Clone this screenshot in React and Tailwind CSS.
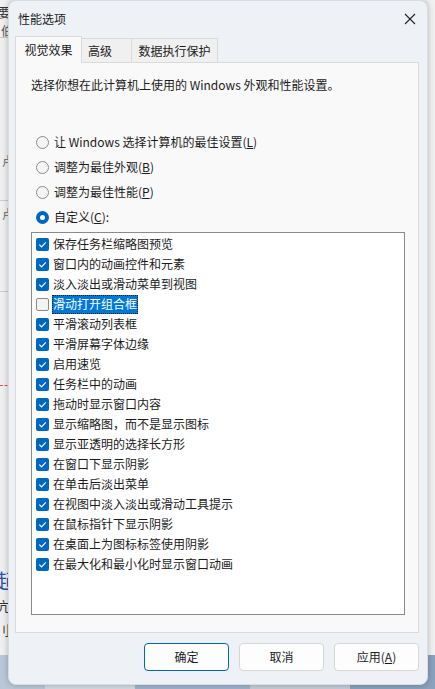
import React, { useState } from 'react';

const FONT = { fontFamily: '"Noto Sans CJK SC", "Noto Sans", sans-serif' };

const effects = [
  ['保存任务栏缩略图预览', true],
  ['窗口内的动画控件和元素', true],
  ['淡入淡出或滑动菜单到视图', true],
  ['滑动打开组合框', false],
  ['平滑滚动列表框', true],
  ['平滑屏幕字体边缘', true],
  ['启用速览', true],
  ['任务栏中的动画', true],
  ['拖动时显示窗口内容', true],
  ['显示缩略图，而不是显示图标', true],
  ['显示亚透明的选择长方形', true],
  ['在窗口下显示阴影', true],
  ['在单击后淡出菜单', true],
  ['在视图中淡入淡出或滑动工具提示', true],
  ['在鼠标指针下显示阴影', true],
  ['在桌面上为图标标签使用阴影', true],
  ['在最大化和最小化时显示窗口动画', true],
];

const Radio = ({ checked, children }) => (
  <div className="flex items-center h-[20px]">
    {checked ? (
      <span className="w-[13px] h-[13px] rounded-full bg-[#0067c0] flex items-center justify-center">
        <span className="w-[5px] h-[5px] rounded-full bg-white" />
      </span>
    ) : (
      <span className="w-[13px] h-[13px] rounded-full border border-[#8b8b8b] bg-[#f5f5f5]" />
    )}
    <span className="ml-[5px] text-[12px] text-[#1b1b1b] leading-none">{children}</span>
  </div>
);

const Check = ({ checked }) =>
  checked ? (
    <span className="w-[13px] h-[13px] rounded-[2px] bg-[#0067c0] flex items-center justify-center shrink-0">
      <svg width="9" height="9" viewBox="0 0 10 10" fill="none">
        <path d="M1.5 5.2 L4 7.6 L8.6 2.6" stroke="white" strokeWidth="1.3" />
      </svg>
    </span>
  ) : (
    <span className="w-[13px] h-[13px] rounded-[2px] border border-[#8b8b8b] bg-[#f3f3f3] shrink-0" />
  );

const Btn = ({ primary, children }) => (
  <button
    className={`w-[85px] h-[28px] rounded-[4px] bg-[#fdfdfd] text-[12px] text-[#1b1b1b] ${
      primary ? 'border border-[#0067c0]' : 'border border-[#d6d6d6]'
    }`}
  >
    {children}
  </button>
);

export default function App() {
  const [selected] = useState(3);
  return (
    <div className="relative w-[435px] h-[689px] overflow-hidden bg-[#f2f2f2]" style={FONT}>
      {/* desktop behind the dialog */}
      <div className="absolute left-0 top-0 w-[12px] h-[689px] bg-[#f0f0f0] overflow-hidden">
        <div className="absolute left-[-2px] top-[2px] text-[13px] text-[#333]">要</div>
        <div className="absolute left-[1px] top-[22px] text-[12px] text-[#555]">伯</div>
        <div className="absolute left-0 top-[37px] w-[12px] h-px bg-[#c8c8c8]" />
        <div className="absolute left-[2px] top-[152px] text-[12px] text-[#666]">卢</div>
        <div className="absolute left-0 top-[200px] w-[12px] h-px bg-[#cccccc]" />
        <div className="absolute left-[2px] top-[205px] text-[12px] text-[#666]">卢</div>
        <div className="absolute left-0 top-[291px] w-[12px] h-px bg-[#cccccc]" />
        <div className="absolute left-0 top-[385px] w-[12px] border-t border-dashed border-[#e05050]" />
        <div className="absolute left-[-4px] top-[566px] text-[20px] text-[#2a4fb0]">起</div>
        <div className="absolute left-[-3px] top-[596px] text-[13px] text-[#333]">亢</div>
        <div className="absolute left-[-3px] top-[620px] text-[13px] text-[#333]">刂</div>
      </div>
      <div className="absolute left-0 top-[655px] w-[435px] h-[34px] flex">
        <div className="w-[45px] bg-[#b9c8d8]" />
        <div className="w-[90px] bg-[#d4dbe3]" />
        <div className="w-[115px] bg-[#9fb3c9]" />
        <div className="w-[100px] bg-[#c5cdd6]" />
        <div className="flex-1 bg-[#8aa2bd]" />
      </div>

      {/* dialog window */}
      <div className="absolute left-[8px] top-0 w-[420px] h-[685px] rounded-[8px] bg-[#eef2f7] shadow-[0_0_6px_rgba(0,0,0,0.25)] border border-[#d8dde3] flex flex-col">
        <div className="h-[35px] flex items-center justify-between pl-[9px] pr-[10px]">
          <span className="text-[12px] text-[#1b1b1b]">性能选项</span>
          <svg width="12" height="12" viewBox="0 0 12 12" className="mr-[1px]">
            <path d="M1 1 L11 11 M11 1 L1 11" stroke="#222" strokeWidth="1.1" />
          </svg>
        </div>

        {/* tabs */}
        <div className="flex items-end pl-[6px] h-[26px] relative z-10">
          <div className="h-[27px] w-[67px] flex items-center justify-center whitespace-nowrap bg-[#f9f9f9] border border-b-0 border-[#dadada] text-[12px] text-[#1b1b1b] mb-[-1px]">
            视觉效果
          </div>
          <div className="h-[24px] w-[50px] pl-[6px] flex items-center whitespace-nowrap bg-[#f0f0f0] border border-l-0 border-b-0 border-[#dadada] text-[12px] text-[#1b1b1b]">
            高级
          </div>
          <div className="h-[24px] w-[86px] flex items-center justify-center whitespace-nowrap bg-[#f0f0f0] border border-l-0 border-b-0 border-[#dadada] text-[12px] text-[#1b1b1b]">
            数据执行保护
          </div>
        </div>

        {/* panel */}
        <div className="mx-[6px] w-[404px] h-[571px] bg-[#f9f9f9] border border-[#dadada] px-[15px] pt-[14px]">
          <p className="text-[12px] text-[#1b1b1b] leading-[16px]">选择你想在此计算机上使用的 Windows 外观和性能设置。</p>
          <div className="mt-[39px] flex flex-col gap-[5px] pl-[5px]">
            <Radio>让 Windows 选择计算机的最佳设置(<u>L</u>)</Radio>
            <Radio>调整为最佳外观(<u>B</u>)</Radio>
            <Radio>调整为最佳性能(<u>P</u>)</Radio>
            <Radio checked>自定义(<u>C</u>):</Radio>
          </div>
          <div className="mt-[5px] w-[374px] h-[383px] bg-white border border-[#8a8a8a] pt-[1px]">
            {effects.map(([label, on], i) => (
              <div key={label} className="flex items-center h-[20px] pl-[4px]">
                <Check checked={on} />
                <span
                  className={`ml-[3px] px-[1px] h-[19px] flex items-center text-[12px] leading-none ${
                    i === selected
                      ? 'bg-[#0078d7] text-white outline outline-1 outline-dotted outline-[#222] -outline-offset-1'
                      : 'text-[#1b1b1b]'
                  }`}
                >
                  {label}
                </span>
              </div>
            ))}
          </div>
        </div>

        {/* buttons */}
        <div className="flex justify-end gap-[10px] pr-[8px] mt-[10px]">
          <Btn primary>确定</Btn>
          <Btn>取消</Btn>
          <Btn>应用(<u>A</u>)</Btn>
        </div>
      </div>
    </div>
  );
}
